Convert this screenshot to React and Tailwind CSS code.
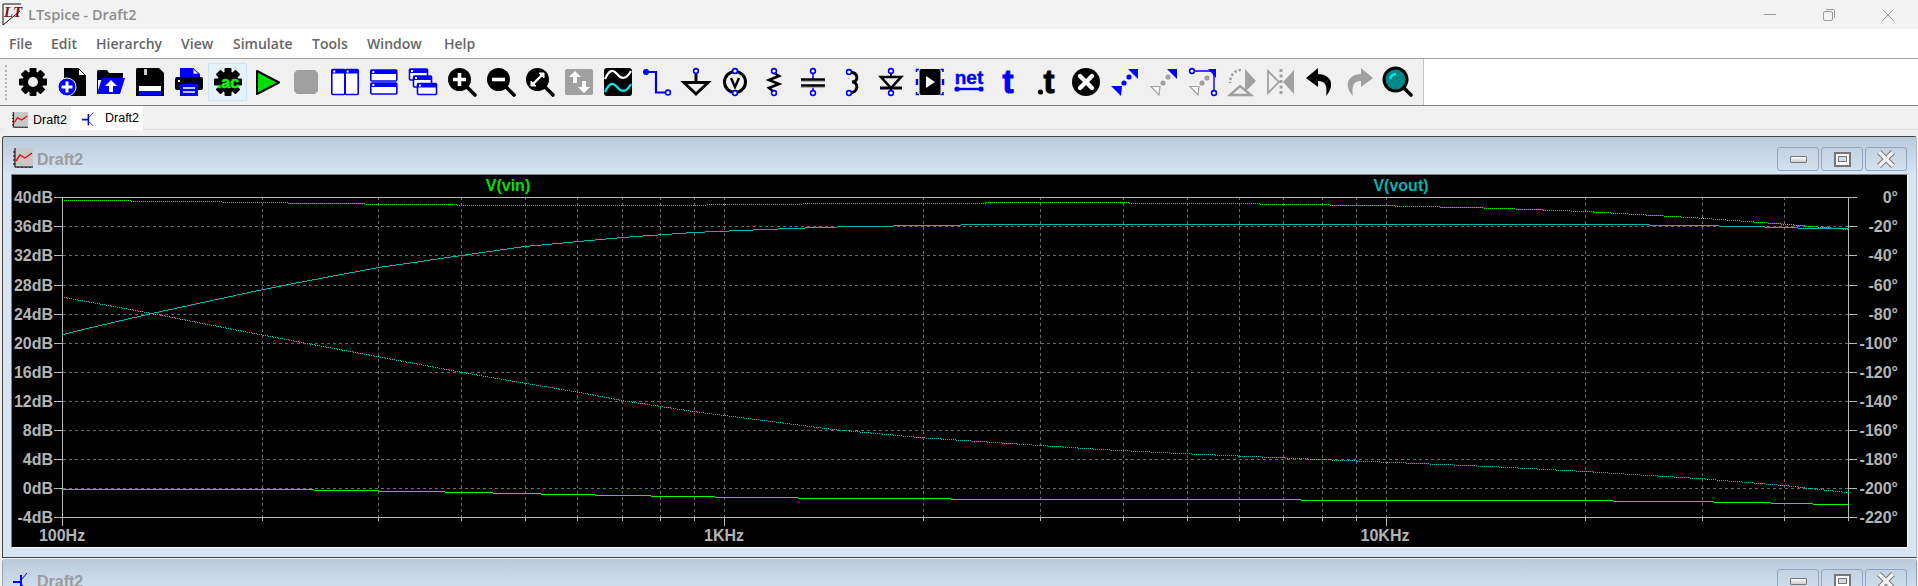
import React from "react";

const BG = "#f0f0f0";
const BLUE = "#0000ff";
const GRAY = "#a0a0a0";

const dbTicks = [40, 36, 32, 28, 24, 20, 16, 12, 8, 4, 0, -4];
const phaseTicks = [0, -20, -40, -60, -80, -100, -120, -140, -160, -180, -200, -220];
const PLOT_L = 62.5;
const PLOT_R = 1848.5;
const DECADE = 661.7;

function rowY(i) {
  return Math.round(197.3 + i * 29.09) + 0.5;
}

function freqX(f) {
  return Math.round(PLOT_L + DECADE * Math.log10(f / 100)) + 0.5;
}

// traces are drawn one pixel column at a time, that gives the stepped look of the plot
function stepPath(pts) {
  let d = "";
  let seg = 0;
  let runY = null;
  let runX = pts[0][0];
  const last = pts[pts.length - 1][0];
  for (let x = Math.floor(pts[0][0]); x <= last; x++) {
    while (seg < pts.length - 2 && x > pts[seg + 1][0]) seg++;
    const [x1, y1] = pts[seg];
    const [x2, y2] = pts[seg + 1];
    const y = Math.round(y1 + ((y2 - y1) * (x - x1)) / (x2 - x1)) + 0.5;
    if (y !== runY) {
      if (runY !== null) d += `M${runX} ${runY}H${x}`;
      runY = y;
      runX = x;
    }
  }
  return d + `M${runX} ${runY}H${last}`;
}

const vinMag = [[62.5, 488.7], [300, 489.3], [392, 490.7], [458, 491.7], [514, 493], [568, 494], [621, 495], [680, 496], [749, 497], [846, 498], [1055, 499], [1546, 500], [1679, 501], [1748, 502], [1794, 503], [1832, 504], [1848.5, 504.3]];
const vinPhase = [[62.5, 200.3], [165, 200.6], [300, 202.7], [407, 204], [534.7, 205.3], [621.4, 205.3], [759, 204], [871, 202.7], [1100, 202.3], [1245, 203.3], [1385.7, 205.3], [1492.9, 207.7], [1584.7, 211], [1702, 217.7], [1783.7, 223.7], [1848.5, 229]];
const voutMag = [[62.5, 334], [78, 330], [150, 313.3], [261, 289.3], [300, 281.7], [376.5, 267.3], [460.7, 255], [524.5, 246], [621.4, 237], [692.9, 232], [764, 229], [825.5, 226.7], [937.8, 224.7], [1050, 223.7], [1579.6, 223.7], [1694, 225], [1758, 226.3], [1804, 227.7], [1848.5, 228.3]];
const voutPhase = [[62.5, 296.7], [150, 312.7], [233, 329], [300, 341.7], [376.5, 356], [460.7, 371.7], [524.5, 382.7], [578, 391.7], [621.4, 400], [692.9, 411], [724.5, 415], [835.7, 429.3], [922.4, 437.3], [1039.8, 445], [1100, 449], [1186.7, 453.3], [1319.4, 459], [1385.7, 461.7], [1482.7, 465.7], [1584.7, 471], [1702, 478.3], [1783.7, 485], [1848.5, 492.3]];

function gridFreqs() {
  const out = [];
  for (const dec of [100, 1000, 10000]) {
    for (let m = 1; m < 10; m++) {
      const f = dec * m;
      if (f > 100 && f < 50000) out.push({ f, major: m === 1 });
    }
  }
  return out;
}

function Plot() {
  return (
    <svg width="1895" height="372" viewBox="12 175 1895 372" className="block" shapeRendering="crispEdges">
      <rect x="12" y="175" width="1895" height="372" fill="#000" />
      {dbTicks.map((t, i) => (
        <g key={t}>
          {i > 0 && i < 11 && (
            <path d={`M${PLOT_L} ${rowY(i)}H${PLOT_R}`} stroke="#6c6c6c" strokeDasharray="3 3" />
          )}
          <path d={`M54 ${rowY(i)}H${PLOT_L}M${PLOT_R} ${rowY(i)}H1857`} stroke="#b8b8b8" />
          <text x="53" y={rowY(i) + 5.5} textAnchor="end" className="font-['Liberation_Sans'] font-bold text-[16px] fill-[#b4b4b4]">
            {t}dB
          </text>
          <text x="1898" y={rowY(i) + 5.5} textAnchor="end" className="font-['Liberation_Sans'] font-bold text-[16px] fill-[#b4b4b4]">
            {phaseTicks[i]}°
          </text>
        </g>
      ))}
      {gridFreqs().map(({ f, major }) => (
        <g key={f}>
          <path d={`M${freqX(f)} 197V517`} stroke="#6c6c6c" strokeDasharray="3 3" />
          <path d={`M${freqX(f)} 517V${major ? 526 : 521}`} stroke="#b8b8b8" />
        </g>
      ))}
      <path d={`M54 197.5H1857M54 517.5H1857M${PLOT_L} 197V526M${PLOT_R} 197V521`} stroke="#b8b8b8" fill="none" />
      <path d={stepPath(vinPhase)} stroke="#00ff00" strokeDasharray="1 1" fill="none" />
      <path d={stepPath(voutPhase)} stroke="#00c0c0" strokeDasharray="1 1" fill="none" />
      <path d={stepPath(voutMag)} stroke="#00b4b4" fill="none" />
      <path d={stepPath(vinMag)} stroke="#00ff00" fill="none" />
      <text x="508" y="191" textAnchor="middle" className="font-['Liberation_Sans'] font-bold text-[16px] fill-[#00e000]">V(vin)</text>
      <text x="1401" y="191" textAnchor="middle" className="font-['Liberation_Sans'] font-bold text-[16px] fill-[#00b4b4]">V(vout)</text>
      <text x="62" y="541" textAnchor="middle" className="font-['Liberation_Sans'] font-bold text-[16px] fill-[#b4b4b4]">100Hz</text>
      <text x="724" y="541" textAnchor="middle" className="font-['Liberation_Sans'] font-bold text-[16px] fill-[#b4b4b4]">1KHz</text>
      <text x="1385" y="541" textAnchor="middle" className="font-['Liberation_Sans'] font-bold text-[16px] fill-[#b4b4b4]">10KHz</text>
    </svg>
  );
}

function Gear({ children }) {
  const teeth = [0, 45, 90, 135];
  return (
    <>
      <circle cx="15" cy="15" r="10.5" fill="#000" />
      {teeth.map((a) => (
        <rect key={a} x="11.5" y="1" width="7" height="28" rx="1" fill="#000" transform={`rotate(${a} 15 15)`} />
      ))}
      {children}
    </>
  );
}

function Pin({ x, y, c = BLUE }) {
  return <circle cx={x} cy={y} r="2.4" fill="#fff" stroke={c} strokeWidth="1.6" />;
}

function Win({ x, y, w, h, bar = 4 }) {
  return (
    <g>
      <rect x={x} y={y} width={w} height={h} rx="1" fill="#fff" stroke={BLUE} strokeWidth="1.6" />
      <rect x={x} y={y} width={w} height={bar} fill={BLUE} />
      <rect x={x + 1.5} y={y + 1} width="2" height="2" fill="#fff" />
    </g>
  );
}

function Lens({ color = "#000", children }) {
  return (
    <>
      <path d="M20 20L28 28" stroke="#000" strokeWidth="3.6" strokeLinecap="round" />
      <circle cx="12.5" cy="12.5" r="11.5" fill={color} stroke="#000" strokeWidth={color === "#000" ? 0 : 3} />
      {children}
    </>
  );
}

const icons = [
  <Gear key="settings"><circle cx="15" cy="15" r="5" fill={BG} /></Gear>,
  <g key="new">
    <path d="M7 1H21L29 9V29H7Z" fill="#000" />
    <path d="M21.5 1.5V8.5H28.5Z" fill="#fff" stroke="#000" strokeWidth="1" />
    <circle cx="10" cy="20" r="9" fill={BLUE} stroke="#fff" strokeWidth="1" />
    <path d="M10 14.5V25.5M4.5 20H15.5" stroke="#fff" strokeWidth="3" />
  </g>,
  <g key="open">
    <path d="M2 3H11L13 6H27V13H2V27H1V4Z" fill="#000" />
    <path d="M3 6H12L14 8H26V11H5Z" fill="#000" />
    <path d="M6 11H29L24 27H1Z" fill={BLUE} />
    <path d="M15 13L21 19H17V25H13V19H9Z" fill="#fff" />
  </g>,
  <g key="save">
    <path d="M2 1H24L29 6V29H1V2Z" fill="#000" />
    <rect x="9" y="2" width="3" height="6" fill="#ccc" />
    <rect x="4" y="19" width="22" height="5" fill="#fff" />
    <rect x="4" y="24" width="22" height="4" fill={BLUE} />
  </g>,
  <g key="print">
    <path d="M6 1H19L26 7V12H6Z" fill={BLUE} />
    <path d="M19 1.5V7H25Z" fill="#fff" stroke={BLUE} strokeWidth="0.8" />
    <rect x="1" y="10" width="28" height="13" rx="2" fill="#000" />
    <rect x="4" y="13" width="2" height="2" fill="#fff" />
    <rect x="6" y="17" width="18" height="12" fill={BLUE} />
    <path d="M9 21H21M9 25H21" stroke="#fff" strokeWidth="1.6" />
  </g>,
  <Gear key="ac">
    <text x="15" y="21" textAnchor="middle" className="font-['Liberation_Sans'] font-bold text-[16px] fill-[#00ff00]" stroke="#00ff00" strokeWidth="0.5">.ac</text>
  </Gear>,
  <path key="run" d="M5 4L27 15.5L5 27Z" fill="#00e000" stroke="#000" strokeWidth="2" strokeLinejoin="round" />,
  <path key="stop" d="M6 3H24L27 6V24L24 27H6L3 24V6Z" fill={GRAY} />,
  <g key="tilev">
    <Win x={1.8} y={2.5} w={13} h={25} />
    <Win x={15.2} y={2.5} w={13} h={25} />
  </g>,
  <g key="tileh">
    <Win x={1.8} y={3} w={26} h={11} />
    <Win x={1.8} y={16} w={26} h={11} />
  </g>,
  <g key="cascade">
    <Win x={1.5} y={2} w={18} h={11} />
    <Win x={5.5} y={9} w={18} h={11} />
    <Win x={9.5} y={16.5} w={19} h={11} />
  </g>,
  <Lens key="zin"><path d="M12.5 6V19M6 12.5H19" stroke="#fff" strokeWidth="3.6" /></Lens>,
  <Lens key="zout"><path d="M6 12.5H19" stroke="#fff" strokeWidth="3.6" /></Lens>,
  <Lens key="zfit">
    <path d="M8 17L17 8" stroke="#fff" strokeWidth="2.4" />
    <path d="M6 14V19H11ZM14 6H19V11Z" fill="#fff" stroke="#fff" strokeWidth="1" />
  </Lens>,
  <g key="pan">
    <rect x="1" y="2" width="28" height="26" rx="2" fill={GRAY} />
    <path d="M11 4L17 10H13V16H9V10H5Z" fill="#fff" />
    <path d="M20 26L14 20H18V14H22V20H26Z" fill="#fff" />
  </g>,
  <g key="waves">
    <rect x="1" y="1" width="28" height="28" rx="3" fill="#000" />
    <path d="M2 12C7 1 11 3 14 7C18 12 23 13 28 4" fill="none" stroke="#fff" strokeWidth="2.2" />
    <path d="M2 25C7 14 11 16 14 20C18 25 23 26 28 17" fill="none" stroke="#00e8e8" strokeWidth="2.2" />
  </g>,
  <g key="wire">
    <circle cx="4" cy="5" r="3" fill={BLUE} />
    <path d="M4 5H14V25.5H24" fill="none" stroke={BLUE} strokeWidth="2.2" />
    <Pin x={26} y={25.5} />
  </g>,
  <g key="gnd">
    <path d="M15 5V15" stroke="#000" strokeWidth="3" />
    <path d="M3 15.5H27L15 27Z" fill="none" stroke="#000" strokeWidth="3" />
    <Pin x={15} y={4} />
  </g>,
  <g key="volt">
    <circle cx="15" cy="15" r="10.5" fill="none" stroke="#000" strokeWidth="3" />
    <path d="M11 11L15 20L19 11" fill="none" stroke="#000" strokeWidth="2.4" />
    <Pin x={15} y={4} />
    <Pin x={15} y={26} />
  </g>,
  <g key="res">
    <path d="M15 6L20 9L10 13L20 17L10 21L15 25" fill="none" stroke="#000" strokeWidth="2.6" />
    <Pin x={15} y={4} />
    <Pin x={15} y={26} />
  </g>,
  <g key="cap">
    <path d="M15 5V12M15 19V25" stroke={BLUE} strokeWidth="1.5" />
    <path d="M3 12.5H27M3 18.5H27" stroke="#000" strokeWidth="2.6" />
    <path d="M3 14.5H27M3 20.5H27" stroke="#b0b0b0" strokeWidth="1" />
    <Pin x={15} y={4} />
    <Pin x={15} y={26} />
  </g>,
  <g key="ind">
    <path d="M12 5C22 5 22 15 15 15C22 15 22 26 12 26" fill="none" stroke="#000" strokeWidth="3" />
    <Pin x={12} y={5} />
    <Pin x={12} y={26} />
  </g>,
  <g key="diode">
    <path d="M15 5V10M15 21V26" stroke="#000" strokeWidth="2" />
    <path d="M5 10H25L15 21Z" fill="none" stroke="#000" strokeWidth="2.6" />
    <path d="M4 21H26" stroke="#000" strokeWidth="3" />
    <Pin x={15} y={4} />
    <Pin x={15} y={26} />
  </g>,
  <g key="comp">
    <rect x="4.5" y="2" width="21" height="26" rx="2" fill="#000" />
    <path d="M11 9L20 15L11 21Z" fill="#fff" />
    <path d="M1.5 5V2.5H4M25.5 2.5H28V5M1.5 25V27.5H4M25.5 27.5H28V25" fill="none" stroke={BLUE} strokeWidth="1.6" />
    <path d="M2 12V18M28 12V18" stroke={BLUE} strokeWidth="2.4" />
  </g>,
  <g key="net">
    <text x="15" y="17" textAnchor="middle" className="font-['Liberation_Sans'] font-bold text-[19px] fill-[#0000ff]" stroke={BLUE} strokeWidth="0.4">net</text>
    <path d="M3 22H27" stroke={BLUE} strokeWidth="2.4" />
    <circle cx="3" cy="22" r="2.6" fill={BLUE} />
    <circle cx="27" cy="22" r="2.6" fill={BLUE} />
  </g>,
  <text key="t" x="15" y="26" textAnchor="middle" className="font-['Liberation_Sans'] font-bold text-[33px] fill-[#0000ff]" stroke={BLUE} strokeWidth="1">t</text>,
  <g key="dott">
    <circle cx="8.5" cy="25" r="2.6" fill="#000" />
    <text x="17" y="26" textAnchor="middle" className="font-['Liberation_Sans'] font-bold text-[33px] fill-[#000]" stroke="#000" strokeWidth="1">t</text>
  </g>,
  <g key="del">
    <circle cx="15" cy="15" r="14" fill="#000" />
    <path d="M9 9L21 21M21 9L9 21" stroke="#fff" strokeWidth="4.4" strokeLinecap="round" />
  </g>,
  <g key="move">
    <path d="M18 2H28V12Z" fill={BLUE} />
    <path d="M1 19H12L11 29Z" fill={BLUE} />
    <circle cx="19" cy="10" r="2.6" fill={BLUE} />
    <circle cx="14" cy="16" r="2.6" fill={BLUE} />
  </g>,
  <g key="drag">
    <path d="M18 2H28V12Z" fill={BLUE} />
    <path d="M2 19.5H11L10 28Z" fill="#fff" stroke={GRAY} strokeWidth="1.2" />
    <circle cx="19" cy="10" r="2.6" fill={GRAY} />
    <circle cx="14" cy="16" r="2.6" fill={GRAY} />
  </g>,
  <g key="dragw">
    <path d="M20 2H28V11Z" fill={BLUE} />
    <path d="M5 4H26V25" fill="none" stroke={BLUE} strokeWidth="1.4" />
    <Pin x={4} y={4} />
    <Pin x={26} y={26} />
    <path d="M2 19.5H11L10 28Z" fill="#fff" stroke={GRAY} strokeWidth="1.2" />
    <circle cx="19" cy="11" r="2.6" fill={GRAY} />
    <circle cx="14" cy="16" r="2.6" fill={GRAY} />
  </g>,
  <g key="rot">
    <path d="M18 2L29 14L18 25Z" fill={GRAY} />
    <path d="M14 3C8 3 3 8 3 16" fill="none" stroke={GRAY} strokeWidth="2.6" strokeDasharray="2.5 2" />
    <path d="M3 28L13 19L24 28Z" fill="none" stroke={GRAY} strokeWidth="2.4" />
  </g>,
  <g key="mirror">
    <path d="M2 4L13 15L2 26Z" fill="none" stroke={GRAY} strokeWidth="1.8" />
    <path d="M28 3L17 15L28 27Z" fill={GRAY} />
    <path d="M15 2V28" stroke={GRAY} strokeWidth="3" strokeDasharray="3 2.5" />
  </g>,
  <path key="undo" d="M13 1L1 11L13 20V14C19 14 23 17 21 29C28 22 30 8 13 7Z" fill="#000" />,
  <path key="redo" d="M17 1L29 11L17 20V14C11 14 7 17 9 29C2 22 0 8 17 7Z" fill={GRAY} />,
  <Lens key="find" color="#008888"><path d="M7 12C8 9 10 7 13 7" stroke="#00e8e8" strokeWidth="2.4" fill="none" /></Lens>,
];

function ChartIcon() {
  return (
    <svg width="20" height="20" viewBox="0 0 20 20" className="shrink-0">
      <rect width="20" height="20" fill="#c8c8c8" />
      <path d="M2 0V19H20M0 4H2M0 8H2M0 12H2M0 16H2M5 19V20M9 19V20M13 19V20M17 19V20" stroke="#000" fill="none" />
      <path d="M3 13L7 7L12 10L19 5" stroke="#ff0000" strokeWidth="1.4" fill="none" />
    </svg>
  );
}

function TransistorIcon() {
  return (
    <svg width="20" height="20" viewBox="0 0 20 20" className="shrink-0">
      <path d="M0 12H7M8 5V19" stroke="#0000ff" strokeWidth="2" fill="none" />
      <path d="M9 9L14 3M9 15L14 20" stroke="#0000ff" fill="none" />
    </svg>
  );
}

function WinButtons() {
  const btn = "w-[42px] h-[24px] rounded-[3px] border border-[#8fa5c0] bg-gradient-to-b from-[#c3d1e0] to-[#d3e0ee] flex items-center justify-center";
  return (
    <div className="flex gap-[2px]">
      <div className={btn}>
        <div className="w-[17px] h-[7px] rounded-[1px] border border-[#777] bg-gradient-to-b from-white to-[#ccc]" />
      </div>
      <div className={btn}>
        <div className="w-[17px] h-[15px] border-[2px] border-[#777] bg-white flex items-center justify-center">
          <div className="w-[9px] h-[6px] border border-[#777] bg-[#cfdcea]" />
        </div>
      </div>
      <div className={btn}>
        <svg width="20" height="18" viewBox="0 0 20 18">
          <path d="M3 2L17 16M17 2L3 16" stroke="#777" strokeWidth="5.4" />
          <path d="M3 2L17 16M17 2L3 16" stroke="#f4f4f4" strokeWidth="3.4" />
        </svg>
      </div>
    </div>
  );
}

function MdiTitle({ icon }) {
  return (
    <div className="h-[37px] shrink-0 pl-[10px] pr-[9px] pt-[10px] flex items-start bg-gradient-to-b from-[#bbcada] to-[#d7e4f2] rounded-t-[3px]">
      <div className="mt-[1px] mr-[4px]">{icon}</div>
      <span className="mt-[1px] font-['Liberation_Sans'] font-bold text-[16px] leading-[24px] text-[#9c9c9c]">Draft2</span>
      <div className="ml-auto">
        <WinButtons />
      </div>
    </div>
  );
}

export default function App() {
  const menus = [
    ["File", "w-[42px]"],
    ["Edit", "w-[45px]"],
    ["Hierarchy", "w-[85px]"],
    ["View", "w-[52px]"],
    ["Simulate", "w-[79px]"],
    ["Tools", "w-[55px]"],
    ["Window", "w-[77px]"],
    ["Help", "w-[50px]"],
  ];

  return (
    <div className="w-[1918px] h-[586px] overflow-hidden flex flex-col bg-[#f0f0f0] font-['Liberation_Sans',sans-serif]">
      {/* title bar */}
      <div className="h-[29px] shrink-0 bg-[#f3f3f3] flex items-center">
        <svg width="22" height="26" viewBox="0 0 22 26" className="ml-[1px] mt-[1px] shrink-0">
          <path d="M2 2H20M2 2V23L19 9" stroke="#111" fill="none" />
          <text x="3" y="15" className="font-['Liberation_Serif'] font-bold italic text-[15px] fill-[#7a1212]">LT</text>
        </svg>
        <span className="ml-[5px] font-['Open_Sans'] font-semibold text-[14.5px] text-[#8c8c8c]">LTspice - Draft2</span>
        <div className="ml-auto flex">
          <div className="w-[59px] h-[29px] flex items-center justify-center">
            <div className="w-[12px] h-px bg-[#999]" />
          </div>
          <div className="w-[59px] h-[29px] flex items-center justify-center">
            <svg width="12" height="12" viewBox="0 0 12 12">
              <rect x="0.5" y="2.5" width="9" height="9" rx="1.5" fill="none" stroke="#999" />
              <path d="M3 0.5H10C11 0.5 11.5 1 11.5 2V9" fill="none" stroke="#999" />
            </svg>
          </div>
          <div className="w-[60px] h-[29px] flex items-center justify-center">
            <svg width="12" height="12" viewBox="0 0 12 12">
              <path d="M0.5 0.5L11.5 11.5M11.5 0.5L0.5 11.5" stroke="#999" />
            </svg>
          </div>
        </div>
      </div>

      {/* menu */}
      <div className="h-[30px] shrink-0 bg-white border-b border-[#a0a0a0] flex items-center pl-[9px] font-['Open_Sans'] font-semibold text-[14px] text-[#666666]">
        {menus.map(([label, w]) => (
          <span key={label} className={w}>{label}</span>
        ))}
      </div>

      {/* toolbar */}
      <div className="h-[47px] shrink-0 bg-white border-b border-[#808080] flex">
        <div className="w-[1424px] bg-[#f0f0f0] border-r border-[#c4c4c4] flex items-center pl-[13px] relative">
          <div className="absolute left-[5px] top-[6px] h-[35px] w-[2px] border-l-2 border-dotted border-[#b4b4b4]" />
          {icons.map((icon, i) => (
            <div
              key={i}
              className={
                i === 5
                  ? "w-[39px] h-[38px] shrink-0 flex items-center justify-center bg-[#e5f1fb] border border-[#cce4f7] rounded-[2px]"
                  : "w-[39px] h-[38px] shrink-0 flex items-center justify-center"
              }
            >
              <svg width="30" height="30" viewBox="0 0 30 30" className="overflow-visible">{icon}</svg>
            </div>
          ))}
        </div>
      </div>

      {/* tabs */}
      <div className="h-[30px] shrink-0 flex flex-col">
        <div className="h-[24px] flex items-stretch pl-[3px] border-b border-[#e2e2e2] text-[12.5px] text-black">
          <div className="w-[68px] h-[24px] flex items-center pl-[7px] pt-[4px] gap-[7px] bg-[#f0f0f0]">
            <div className="scale-[0.8]"><ChartIcon /></div>
            <span className="-ml-[4px]">Draft2</span>
          </div>
          <div className="w-[72px] h-[24px] flex items-center pl-[9px] gap-[8px] bg-white">
            <div className="scale-[0.8]"><TransistorIcon /></div>
            <span className="-ml-[3px]">Draft2</span>
          </div>
        </div>
      </div>

      {/* mdi area */}
      <div className="flex-1 min-h-0 flex flex-col pl-[2px] pr-[1px] gap-[1px]">
        <div className="h-[422px] shrink-0 flex flex-col border-t border-l border-b border-[#444] border-r-[#b4bcc8] border-r rounded-t-[3px] bg-[#d7e4f2]">
          <MdiTitle icon={<ChartIcon />} />
          <div className="pl-[8px] pr-[8px]">
            <div className="border-t border-l border-[#7c7c7c] border-r border-b border-r-white border-b-white">
              <Plot />
            </div>
          </div>
        </div>
        <div className="flex-1 min-h-0 overflow-hidden border-l border-r border-[#9aa4b0] rounded-t-[3px] bg-[#d7e4f2]">
          <MdiTitle icon={<TransistorIcon />} />
        </div>
      </div>
    </div>
  );
}
